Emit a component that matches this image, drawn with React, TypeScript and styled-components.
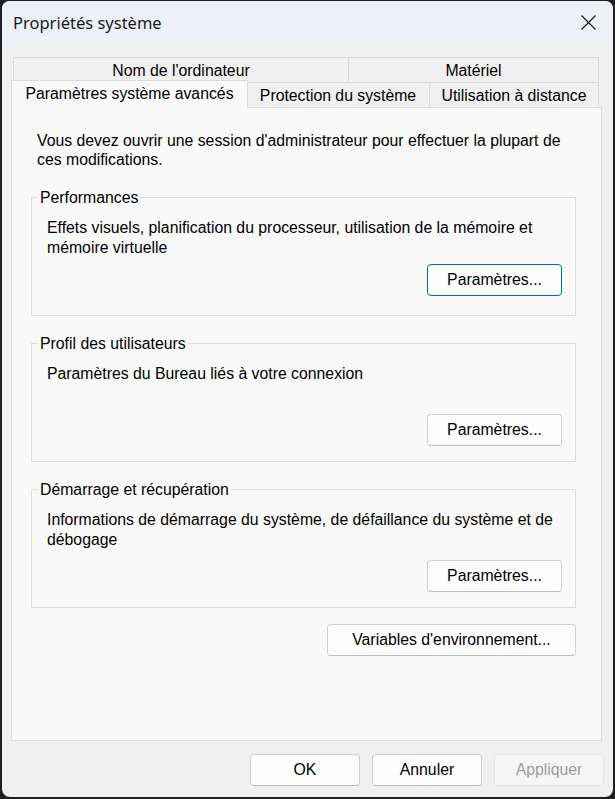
import React from "react";
import styled, { createGlobalStyle } from "styled-components";

const Global = createGlobalStyle`
  html, body { margin: 0; padding: 0; background: #202020; }
  body { width: 615px; height: 799px; overflow: hidden; }
  * { box-sizing: border-box; }
`;

const FONT = `"Liberation Sans", Arial, sans-serif`;

const Window = styled.div`
  margin: 1px 0 0 2px;
  width: 611px;
  height: 796px;
  border-radius: 8px;
  background: #f0f0f0;
  overflow: hidden;
  display: flex;
  flex-direction: column;
  font-family: ${FONT};
  font-size: 15.8px;
  color: #000;
`;

const TitleBar = styled.div`
  flex: 0 0 44px;
  background: #eef0f8;
  display: flex;
  align-items: center;
  justify-content: space-between;
  padding: 0 17px 0 11px;
`;

const Title = styled.div`
  font-family: "Noto Sans", "Open Sans", sans-serif;
  font-size: 16.5px;
  color: #1a1a1a;
  padding-bottom: 1px;
`;

const CloseIcon = styled.svg`
  width: 15px;
  height: 15px;
  margin-bottom: 1px;
`;

const Body = styled.div`
  flex: 1;
  display: flex;
  flex-direction: column;
  padding: 12px 0 0 9px;
`;

const TabStrip = styled.div`
  width: 586px;
  margin-left: 2px;
  display: flex;
  flex-direction: column;
`;

const TabRow = styled.div`
  display: flex;
  height: 25px;
`;

const Tab = styled.div<{ $w: number; $active?: boolean }>`
  flex: 0 0 ${(p) => p.$w}px;
  display: flex;
  align-items: center;
  justify-content: center;
  background: ${(p) => (p.$active ? "#f9f9f9" : "#f0f0f0")};
  border: 1px solid #dadada;
  border-bottom: none;
  border-right: none;
  white-space: nowrap;
  padding-top: 1px;
  &:last-child { border-right: 1px solid #dadada; }
  ${(p) =>
    p.$active &&
    `
    position: relative;
    z-index: 1;
    flex-basis: ${p.$w + 4}px;
    margin: -2px -2px -1px -2px;
    border-right: 1px solid #dadada;
    padding-top: 0;
    padding-bottom: 2px;
  `}
`;

const Panel = styled.div`
  width: 591px;
  height: 634px;
  border: 1px solid #dcdcdc;
  background: #f9f9f9;
  padding: 23px 25px 0 19px;
  display: flex;
  flex-direction: column;
`;

const Intro = styled.p`
  margin: 0 0 0 6px;
  line-height: 19px;
`;

const Group = styled.fieldset`
  margin: 18px 0 0 0;
  padding: 0;
  width: 545px;
  border: 1px solid #dcdcdc;
  min-width: 0;
  &:first-of-type { margin-top: 19px; }
`;

const Legend = styled.legend`
  margin-left: 6px;
  padding: 0 2px;
  line-height: 19px;
`;

const GroupBody = styled.div`
  height: 108px;
  padding: 11px 13px 0 15px;
  display: flex;
  flex-direction: column;
`;

const Desc = styled.p`
  margin: 0;
  height: 40px;
  line-height: 20px;
`;

const ButtonRow = styled.div<{ $gap: number }>`
  display: flex;
  justify-content: flex-end;
  margin-top: ${(p) => p.$gap}px;
`;

const Button = styled.button<{ $w: number; $primary?: boolean }>`
  width: ${(p) => p.$w}px;
  height: 32px;
  font-family: ${FONT};
  font-size: 15.8px;
  color: #000;
  background: #fdfdfd;
  border: 1px solid ${(p) => (p.$primary ? "#0067c0" : "#d0d0d0")};
  border-bottom-color: ${(p) => (p.$primary ? "#0067c0" : "#bcbcbc")};
  border-radius: 4px;
  padding: 0;
  flex: 0 0 auto;
  &:disabled {
    background: #f5f5f5;
    border-color: #e5e5e5;
    color: #9d9d9d;
  }
`;

const EnvRow = styled.div`
  display: flex;
  justify-content: flex-end;
  margin: 16px 2px 0 0;
  width: 545px;
`;

const Footer = styled.div`
  display: flex;
  justify-content: flex-end;
  gap: 12px;
  padding: 13px 9px 0 0;
`;

const groups = [
  {
    title: "Performances",
    desc: ["Effets visuels, planification du processeur, utilisation de la mémoire et", "mémoire virtuelle"],
    gap: 6,
    primary: true,
  },
  {
    title: "Profil des utilisateurs",
    desc: ["Paramètres du Bureau liés à votre connexion"],
    gap: 10,
  },
  {
    title: "Démarrage et récupération",
    desc: ["Informations de démarrage du système, de défaillance du système et de", "débogage"],
    gap: 10,
  },
];

export default function App() {
  return (
    <>
      <Global />
      <Window>
        <TitleBar>
          <Title>Propriétés système</Title>
          <CloseIcon viewBox="0 0 15 15">
            <path d="M0.5 0.5 L14.5 14.5 M14.5 0.5 L0.5 14.5" stroke="#1a1a1a" strokeWidth="1.2" fill="none" />
          </CloseIcon>
        </TitleBar>
        <Body>
          <TabStrip>
            <TabRow>
              <Tab $w={335}>Nom de l'ordinateur</Tab>
              <Tab $w={251}>Matériel</Tab>
            </TabRow>
            <TabRow>
              <Tab $w={233} $active>Paramètres système avancés</Tab>
              <Tab $w={183}>Protection du système</Tab>
              <Tab $w={170}>Utilisation à distance</Tab>
            </TabRow>
          </TabStrip>
          <Panel>
            <Intro>
              Vous devez ouvrir une session d'administrateur pour effectuer la plupart de
              <br />
              ces modifications.
            </Intro>
            {groups.map((g) => (
              <Group key={g.title}>
                <Legend>{g.title}</Legend>
                <GroupBody>
                  <Desc>
                    {g.desc.map((l, i) => (
                      <React.Fragment key={i}>
                        {i > 0 && <br />}
                        {l}
                      </React.Fragment>
                    ))}
                  </Desc>
                  <ButtonRow $gap={g.gap}>
                    <Button $w={135} $primary={g.primary}>Paramètres...</Button>
                  </ButtonRow>
                </GroupBody>
              </Group>
            ))}
            <EnvRow>
              <Button $w={249}>Variables d'environnement...</Button>
            </EnvRow>
          </Panel>
          <Footer>
            <Button $w={110}>OK</Button>
            <Button $w={110}>Annuler</Button>
            <Button $w={110} disabled>Appliquer</Button>
          </Footer>
        </Body>
      </Window>
    </>
  );
}
